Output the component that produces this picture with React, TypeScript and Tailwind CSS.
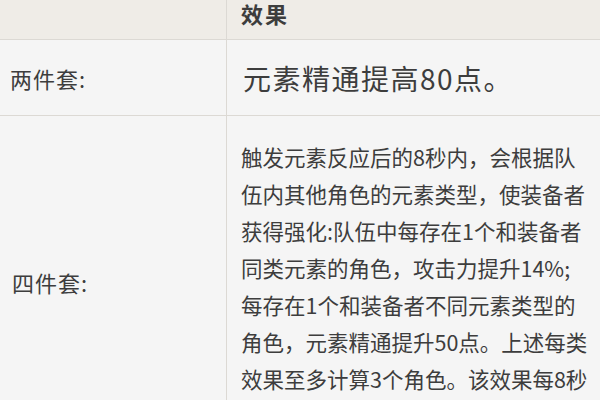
import React from "react";

const lines = [
  "触发元素反应后的8秒内，会根据队",
  "伍内其他角色的元素类型，使装备者",
  "获得强化:队伍中每存在1个和装备者",
  "同类元素的角色，攻击力提升14%;",
  "每存在1个和装备者不同元素类型的",
  "角色，元素精通提升50点。上述每类",
  "效果至多计算3个角色。该效果每8秒",
  "最多触发一次。装备者处于队伍后台",
];

export default function App() {
  return (
    <div
      className="w-[600px] h-[400px] overflow-hidden bg-[#f5f5f5] text-[#3d3d3d]"
      style={{ fontFamily: '"Noto Sans CJK SC", "Noto Sans", sans-serif' }}
    >
      <div className="grid grid-cols-[227px_1fr] w-[660px]">
        {/* header */}
        <div className="h-[40px] bg-[#efece7] border-b border-r border-[#dcd9d4]" />
        <div className="h-[40px] bg-[#efece7] border-b border-[#dcd9d4] pl-[14px]">
          <div className="text-[22px] leading-[26px] tracking-[2px] font-bold whitespace-nowrap">效果</div>
        </div>
        {/* row 2 */}
        <div className="h-[76px] border-b border-r border-[#dcd9d4] flex items-center pl-[10px]">
          <span className="text-[22px] leading-[28px] tracking-[1px] whitespace-nowrap">两件套:</span>
        </div>
        <div className="h-[76px] border-b border-[#dcd9d4] flex items-center pl-[16px]">
          <span className="text-[28px] leading-[34px] tracking-[1.5px] whitespace-nowrap">元素精通提高80点。</span>
        </div>
        {/* row 3 */}
        <div className="border-r border-[#dcd9d4] flex items-center pl-[12px]">
          <span className="text-[22px] leading-[28px] tracking-[1px] whitespace-nowrap">四件套:</span>
        </div>
        <div className="pl-[14px] pt-[22px] pb-[14px]">
          {lines.map((l, i) => (
            <div key={i} className="text-[21.5px] leading-[37px] whitespace-nowrap">
              {l}
            </div>
          ))}
        </div>
      </div>
    </div>
  );
}
